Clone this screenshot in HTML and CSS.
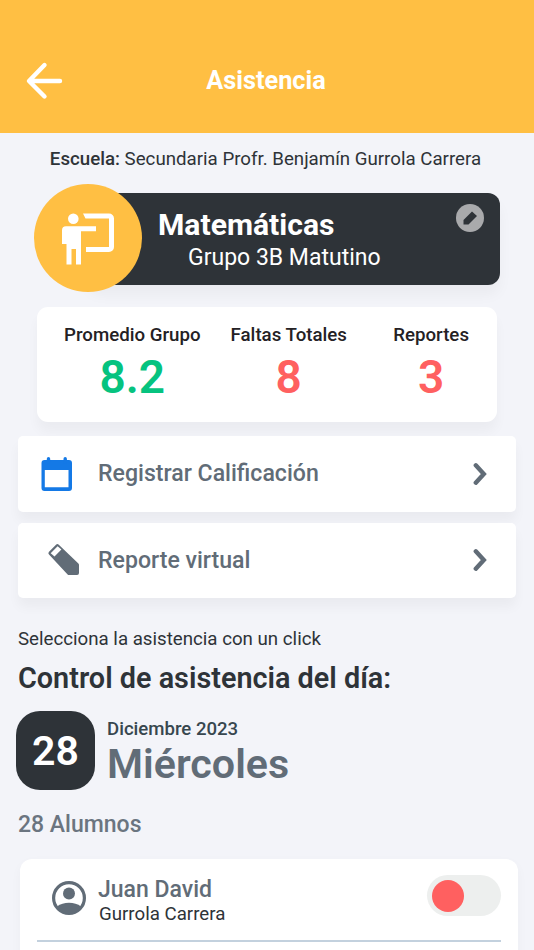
FILE: index.html
```html
<!DOCTYPE html>
<html lang="es">
<head>
    <meta charset="UTF-8">
    <meta name="viewport" content="width=device-width, initial-scale=1.0">
    <title>Asistencia</title>
    <link rel="stylesheet" href="styles.css">
</head>
<body>

<header class="top-bar">
    <a href="#" class="back-btn" aria-label="Regresar">
        <svg width="40" height="40" viewBox="0 0 40 40"><path d="M19.500 5L4 21l15.500 15.500M4.500 21H35" fill="none" stroke="#fff" stroke-width="4.400" stroke-linecap="round" stroke-linejoin="round"/></svg>
    </a>
    <h1>Asistencia</h1>
</header>

<p class="school"><strong>Escuela:</strong> Secundaria Profr. Benjamín Gurrola Carrera</p>

<!-- Materia -->
<section class="subject">
    <div class="subject-icon">
        <svg width="54" height="54" viewBox="0 0 54 54">
            <circle cx="12.300" cy="7.800" r="5.300" fill="#fff"/>
            <path d="M5 15.300H35v5H20V53.500h-5V38h-4.500v15.500h-5V33H1V19.300a4 4 0 0 1 4-4z" fill="#fff"/>
            <path d="M22 2.500H48a5 5 0 0 1 5 5V36a5 5 0 0 1-5 5H25v-5H48V7.500H24.500z" fill="#fff"/>
        </svg>
    </div>
    <div class="subject-card">
        <div class="subject-text">
            <h2>Matemáticas</h2>
            <p>Grupo 3B Matutino</p>
        </div>
        <button class="edit-btn" aria-label="Editar">
            <svg width="28" height="28" viewBox="0 0 28 28"><path d="M7.500 20.500V16L16 7.500l5 4.500L12.500 20.500z" fill="#2e3338"/></svg>
        </button>
    </div>
</section>

<!-- Resumen del grupo -->
<section class="stats">
    <div class="stat">
        <span class="stat-label">Promedio Grupo</span>
        <span class="stat-value good">8.2</span>
    </div>
    <div class="stat">
        <span class="stat-label">Faltas Totales</span>
        <span class="stat-value bad">8</span>
    </div>
    <div class="stat stat-reports">
        <span class="stat-label">Reportes</span>
        <span class="stat-value bad">3</span>
    </div>
</section>

<nav class="actions">
    <a href="#" class="action">
        <svg class="action-icon" width="80" height="76" viewBox="0 0 80 76">
            <path d="M26.500 24H51a3 3 0 0 1 3 3V52a3 3 0 0 1-3 3H26.500a3 3 0 0 1-3-3V27a3 3 0 0 1 3-3zM26.800 34V51.300H50.500V34z" fill="#1479e6" fill-rule="evenodd"/>
            <path d="M30.500 26V22.800M47.200 26V22.800" stroke="#1479e6" stroke-width="3.400" stroke-linecap="round"/>
        </svg>
        <span>Registrar Calificación</span>
        <svg class="chevron" width="14" height="24" viewBox="0 0 14 24"><path d="M2.800 3.300L10.800 12L2.800 20.700" fill="none" stroke="#616c77" stroke-width="4.400" stroke-linecap="round"/></svg>
    </a>
    <a href="#" class="action">
        <svg class="action-icon" width="80" height="76" viewBox="0 0 80 76">
            <path d="M31 29.700L38 22.700a2 2 0 0 1 2.800 0L60.400 41.400a2 2 0 0 1 .6 1.400V51a2 2 0 0 1-2 2H51a2 2 0 0 1-1.400-.6L31 32.500a2 2 0 0 1 0-2.800zM32.700 31.200L36.500 34.600L43.400 27.500L39.600 24.200z" fill="#616c77" fill-rule="evenodd"/>
        </svg>
        <span>Reporte virtual</span>
        <svg class="chevron" width="14" height="24" viewBox="0 0 14 24"><path d="M2.800 3.300L10.800 12L2.800 20.700" fill="none" stroke="#616c77" stroke-width="4.400" stroke-linecap="round"/></svg>
    </a>
</nav>

<!-- Control de asistencia -->
<section class="attendance">
    <p class="hint">Selecciona la asistencia con un click</p>
    <h2 class="attendance-title">Control de asistencia del día:</h2>
    <div class="date">
        <div class="date-day">28</div>
        <div class="date-text">
            <span class="date-month">Diciembre 2023</span>
            <span class="date-weekday">Miércoles</span>
        </div>
    </div>
    <p class="total">28 Alumnos</p>
</section>

<ul class="students">
    <li class="student">
        <svg class="avatar" width="34" height="34" viewBox="0 0 34 34">
            <circle cx="17" cy="17" r="15.400" fill="none" stroke="#616c77" stroke-width="3.200"/>
            <circle cx="17" cy="12.500" r="6" fill="#616c77"/>
            <path d="M5 25.500Q10 21.800 17 21.800T29 25.500Q25 32.500 17 32.500T5 25.500z" fill="#616c77"/>
        </svg>
        <div class="student-name">
            <span class="first-name">Juan David</span>
            <span class="last-name">Gurrola Carrera</span>
        </div>
        <button class="switch" aria-label="Asistencia"><span class="knob"></span></button>
    </li>
</ul>

</body>
</html>
```
FILE: styles.css
```css
* {
    box-sizing: border-box;
}

html, body {
    margin: 0;
    padding: 0;
    height: 950px;
    overflow: hidden;
}

/* General Styles */
body {
    font-family: Roboto, sans-serif;
    background-color: #f3f4f9;
    color: #2e3338;
}

h1, h2, p, ul {
    margin: 0;
    padding: 0;
}

svg {
    display: block;
}

button {
    border: none;
    padding: 0;
    cursor: pointer;
}

/* Header Styles */
.top-bar {
    display: grid;
    grid-template-columns: 64px 1fr 66px;
    align-items: start;
    height: 133px;
    padding-top: 60px;
    background: #ffbf43;
    color: white;
}

.back-btn {
    padding-left: 25px;
}

.top-bar h1 {
    font-size: 25.300px;
    line-height: 41px;
    font-weight: bold;
    text-align: center;
}

.school {
    padding: 14px 3px 0 0;
    font-size: 18.700px;
    line-height: 24px;
    text-align: center;
    white-space: nowrap;
}

.school strong {
    font-weight: 500;
}

/* Subject */
.subject {
    display: flex;
    align-items: center;
    height: 108px;
    margin: 13px 34px 0;
}

.subject-icon {
    display: flex;
    align-items: center;
    justify-content: center;
    width: 108px;
    height: 108px;
    border-radius: 50%;
    background: #ffbf43;
    z-index: 1;
}

.subject-card {
    display: flex;
    justify-content: space-between;
    flex: 1;
    height: 92px;
    margin: 2px 0 0 -54px;
    padding: 11px 16px 0 70px;
    border-radius: 12px;
    background: #2e3338;
    color: white;
    box-shadow: 0 10px 14px rgba(0, 0, 0, 0.04);
}

.subject-text h2 {
    font-size: 30.100px;
    line-height: 42px;
    font-weight: bold;
}

.subject-text p {
    padding-left: 30px;
    font-size: 23px;
    line-height: 24px;
}

.edit-btn {
    width: 28px;
    height: 28px;
    border-radius: 50%;
    background: #a9aaac;
}

/* Stats */
.stats {
    display: flex;
    gap: 30px;
    height: 115px;
    margin: 15px 37px 0;
    padding: 16px 28px 0 27px;
    border-radius: 11px;
    background: white;
    box-shadow: 0 10px 12px rgba(0, 0, 0, 0.035);
}

.stat {
    display: flex;
    flex-direction: column;
    align-items: center;
}

.stat-reports {
    margin-left: auto;
}

.stat-label {
    font-size: 18.700px;
    line-height: 24px;
    font-weight: 500;
    color: #242124;
}

.stat-value {
    font-size: 46px;
    line-height: 60px;
    font-weight: 600;
}

.good {
    color: #06c37f;
}

.bad {
    color: #ff6060;
}

/* Actions */
.actions {
    display: flex;
    flex-direction: column;
    gap: 11px;
    margin: 14px 18px 0;
}

.action {
    display: flex;
    align-items: center;
    height: 75.500px;
    padding-right: 29px;
    border-radius: 5px;
    background: white;
    box-shadow: 0 9px 12px rgba(0, 0, 0, 0.04);
    color: #616c77;
    font-size: 23.100px;
    font-weight: 500;
    text-decoration: none;
}

.chevron {
    margin-left: auto;
}

/* Attendance */
.attendance {
    padding: 29px 18px 0;
}

.hint {
    font-size: 18.700px;
    line-height: 24px;
}

.attendance-title {
    margin-top: 9px;
    font-size: 28.800px;
    line-height: 36px;
    font-weight: 600;
}

.date {
    display: flex;
    align-items: center;
    gap: 12px;
    margin: 15px 0 0 -2px;
}

.date-day {
    width: 79px;
    height: 79px;
    border-radius: 24px;
    background: #2e3338;
    color: white;
    font-size: 41px;
    line-height: 80px;
    font-weight: 600;
    text-align: center;
}

.date-text {
    display: flex;
    flex-direction: column;
    padding-top: 4px;
}

.date-month {
    font-size: 18.600px;
    line-height: 24px;
    font-weight: 500;
    color: #37474f;
}

.date-weekday {
    font-size: 41.200px;
    line-height: 47px;
    font-weight: 600;
    color: #616c77;
}

.total {
    margin-top: 21px;
    font-size: 23px;
    line-height: 28px;
    font-weight: 500;
    color: #6b7580;
}

/* Students */
.students {
    list-style: none;
    height: 110px;
    margin: 20px 16px 0 20px;
    padding: 0 17px;
    border-radius: 12px;
    background: white;
    box-shadow: 0 4px 12px rgba(0, 0, 0, 0.03);
}

.student {
    display: flex;
    align-items: center;
    height: 83px;
    padding: 0 0 3px 15px;
    border-bottom: 2px solid #c3d1de;
}

.student-name {
    display: flex;
    flex-direction: column;
    padding: 7px 0 0 12px;
}

.first-name {
    font-size: 23px;
    line-height: 25px;
    font-weight: 500;
    color: #616c77;
}

.last-name {
    padding-left: 1px;
    font-size: 18.700px;
    line-height: 24px;
}

/* Switch */
.switch {
    width: 74px;
    height: 41px;
    margin: 0 0 5px auto;
    padding-left: 5px;
    border-radius: 21px;
    background: #edefee;
}

.knob {
    display: block;
    width: 32px;
    height: 32px;
    border-radius: 50%;
    background: #ff6060;
}
```
